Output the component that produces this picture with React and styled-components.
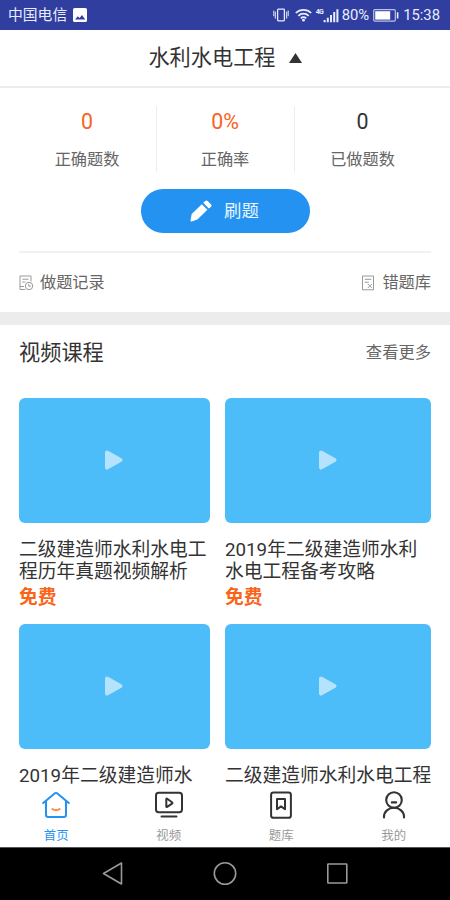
import React from 'react';
import styled, { createGlobalStyle } from 'styled-components';

const Global = createGlobalStyle`
  *, *::before, *::after { box-sizing: border-box; }
  body {
    margin: 0;
    background: #fff;
    font-family: Roboto, "Noto Sans CJK SC", sans-serif;
    color: #333;
  }
`;

const Screen = styled.div`
  width: 450px;
  height: 900px;
  display: flex;
  flex-direction: column;
  overflow: hidden;
  background: #fff;
`;

const StatusBar = styled.header`
  height: 30px;
  flex: none;
  display: flex;
  align-items: center;
  justify-content: space-between;
  padding: 0 10px 0 8px;
  background: #303f9f;
  color: #e9ecff;
  font-size: 14.8px;
  line-height: 20px;
`;

const StatusGroup = styled.div`
  display: flex;
  align-items: center;
  gap: ${p => p.$gap}px;
  white-space: nowrap;
  svg { display: block; flex: none; }
`;

const Signal = styled.span`
  display: flex;
  align-items: flex-start;
`;

const NetworkType = styled.span`
  width: 8px;
  margin-right: -1px;
  font-size: 7px;
  font-weight: 700;
  line-height: 9px;
  letter-spacing: -0.6px;
`;

const TitleBar = styled.div`
  height: 57.5px;
  flex: none;
  display: flex;
  align-items: center;
  justify-content: center;
  gap: 13px;
  padding-top: 1px;
  border-bottom: 2.5px solid #ececec;
  font-size: 21.2px;
  line-height: 30px;
  svg { display: block; margin: -1px 0 0 0; }
`;

const Stats = styled.section`
  flex: none;
  height: 64px;
  margin: 18.5px 19.5px 0 18.5px;
  display: grid;
  grid-template-columns: 137px 138px 137px;
`;

const Stat = styled.div`
  display: flex;
  flex-direction: column;
  align-items: center;
  border-left: ${p => (p.$divided ? '1.5px solid #ededed' : '0')};
`;

const StatValue = styled.div`
  margin-top: 1px;
  font-size: 21.4px;
  line-height: 30px;
  color: ${p => (p.$accent ? '#f9621f' : '#333')};
`;

const StatLabel = styled.div`
  margin-top: 10.5px;
  font-size: 16.2px;
  line-height: 24px;
  color: #666;
`;

const PracticeButton = styled.button`
  flex: none;
  align-self: center;
  width: 169px;
  height: 44px;
  margin-top: 18.5px;
  padding: 0 1px 0 0;
  border: 0;
  border-radius: 22px;
  display: flex;
  align-items: center;
  justify-content: center;
  gap: 12px;
  background: #2492f0;
  color: #eaf6ff;
  font: inherit;
  font-size: 17.4px;
  line-height: 24px;
  svg { display: block; }
`;

const Links = styled.div`
  flex: none;
  height: 61px;
  margin: 18px 19px 0;
  padding-top: 2.5px;
  border-top: 2px solid #f1f1f1;
  display: flex;
  align-items: center;
  justify-content: space-between;
`;

const QuickLink = styled.div`
  display: flex;
  align-items: center;
  gap: 6px;
  font-size: 16.2px;
  line-height: 24px;
  color: #666;
  svg { display: block; margin-top: -1px; }
`;

const Divider = styled.div`
  flex: none;
  height: 13px;
  background: #ececec;
`;

const Courses = styled.main`
  flex: 1;
  min-height: 0;
  overflow: hidden;
  padding: 0 19px;
`;

const SectionHead = styled.div`
  height: 54px;
  padding-top: 2.5px;
  display: flex;
  align-items: center;
  justify-content: space-between;
`;

const SectionTitle = styled.h2`
  margin: 0;
  font-size: 21.2px;
  font-weight: 400;
  line-height: 30px;
`;

const More = styled.span`
  font-size: 16.3px;
  line-height: 24px;
  color: #666;
`;

const CourseGrid = styled.div`
  margin-top: 19px;
  display: grid;
  grid-template-columns: 190.5px 206px;
  column-gap: 15.5px;
  row-gap: 15px;
`;

const Thumb = styled.div`
  height: 125px;
  border-radius: 6px;
  display: flex;
  align-items: center;
  justify-content: center;
  background: #4dbdf9;
`;

const CourseTitle = styled.h3`
  margin: 16px -6px 0 0;
  font-size: 18.75px;
  font-weight: 400;
  line-height: 22px;
  white-space: nowrap;
`;

const Price = styled.div`
  margin-top: 4px;
  font-size: 18.75px;
  font-weight: 700;
  line-height: 22px;
  color: #fa6318;
`;

const TabBar = styled.nav`
  flex: none;
  height: 59.5px;
  display: grid;
  grid-template-columns: repeat(4, 1fr);
  background: #fff;
`;

const Tab = styled.div`
  display: flex;
  flex-direction: column;
  align-items: center;
  color: ${p => (p.$active ? '#2492f0' : '#999')};
  font-size: 12.4px;
  line-height: 18px;
  svg { display: block; margin-bottom: 7px; }
`;

const SystemNav = styled.footer`
  flex: none;
  height: 53px;
  display: flex;
  align-items: center;
  justify-content: center;
  gap: 88px;
  background: #000;
  border-top: 1px solid #555;
`;

const ImageIcon = () => (
  <svg width="14" height="14" viewBox="0 0 14 14">
    <rect width="14" height="14" rx="1.6" fill="#fff" />
    <path d="M2 11.5 4.8 8.2 6.6 10 9 7 12.2 11.5Z" fill="#303f9f" />
  </svg>
);

const VibrateIcon = () => (
  <svg width="16" height="14" viewBox="0 0 16 14" fill="none" stroke="#e9ecff" strokeWidth="1.3">
    <rect x="4.6" y="1.2" width="6.8" height="11.6" rx=".8" />
    <path d="M2.3 3.6v7M13.7 3.6v7M.8 2.6v5.6M15.2 2.6v5.6" strokeWidth="1" />
  </svg>
);

const WifiIcon = () => (
  <svg width="17" height="14" viewBox="0 0 17 14" fill="none" stroke="#e9ecff" strokeWidth="1.7">
    <path d="M.8 5a11 11 0 0 1 15.4 0M3.3 7.8a7.4 7.4 0 0 1 10.4 0M5.8 10.3a3.9 3.9 0 0 1 5.4 0" />
    <circle cx="8.5" cy="12.2" r="1.4" fill="#e9ecff" stroke="none" />
  </svg>
);

const SignalIcon = () => (
  <svg width="16" height="15" viewBox="7 0 16 15" fill="#e9ecff">
    <path d="M7.6 12h2v2.3h-2zM10.8 9.7h2v4.6h-2zM14 7h2v7.3h-2zM17.2 4h2v10.3h-2zM20.4 1.3h2v13h-2z" />
  </svg>
);

const BatteryIcon = () => (
  <svg width="26" height="13" viewBox="0 0 26 13">
    <rect x=".7" y=".7" width="21.6" height="11.4" rx="1" fill="none" stroke="#b9c0ec" strokeWidth="1.2" />
    <path d="M2.2 2.2h15v8.4h-15z" fill="#fff" />
    <path d="M24.6 3.3v6.2" stroke="#e9ecff" strokeWidth="1.6" />
  </svg>
);

const PencilIcon = () => (
  <svg width="22" height="22" viewBox="0 0 22 22" fill="#fff">
    <path d="M11.8 4.2 17.4 9.8 7.4 19.6 1.8 21.4Q.2 21.8.5 20.2L1.7 14ZM13.2 2.8 15.2.9Q16.4-.1 17.7 1.1L20.9 4.3Q22.2 5.6 20.9 6.9L18.8 8.5Z" />
  </svg>
);

const RecordIcon = () => (
  <svg width="15" height="16" viewBox="0 0 15 16" fill="none" stroke="#999" strokeWidth="1">
    <path d="M12 6.5V1H1v13.5h5.2M3.3 4.2h6.2M3.3 7h3M1 11.5h4" />
    <circle cx="10" cy="11" r="3.7" />
    <path d="M9.8 8.8v2.4h2" />
  </svg>
);

const WrongIcon = () => (
  <svg width="15" height="16" viewBox="0 0 15 16" fill="none" stroke="#999" strokeWidth="1">
    <path d="M1.5 1h11v13.8h-11ZM3.8 4.3h6.5M3.8 7.3h4M6.8 9l4 4M10.8 9l-4 4" />
  </svg>
);

const PlayIcon = () => (
  <svg width="20" height="20" viewBox="0 0 20 20">
    <path d="M3 2.4 16.4 10 3 17.6Z" fill="#b5e2fd" stroke="#b5e2fd" strokeWidth="4" strokeLinejoin="round" />
  </svg>
);

const HomeIcon = () => (
  <svg width="30" height="32" viewBox="0 0 30 32" fill="none" stroke="#2492f0" strokeWidth="2" strokeLinecap="round" strokeLinejoin="round">
    <path d="M2.2 15 13.6 5.4Q15 4.4 16.4 5.4L27.8 15M5 13.4v13.3Q5 28.9 7.2 28.9H22.8Q25 28.9 25 26.7V13.4" />
    <path d="M11.4 21q3.6 2.4 7.2 0" stroke="#ff8a4a" />
  </svg>
);

const VideoIcon = () => (
  <svg width="30" height="32" viewBox="0 0 30 32" fill="none" stroke="#333" strokeWidth="2" strokeLinecap="round" strokeLinejoin="round">
    <rect x="2" y="4.8" width="26" height="19.4" rx="2.6" />
    <path d="M12.3 11.2v7.2q0 .9.9.4L18 15.6q.9-.7 0-1.4l-4.8-3.4q-.9-.5-.9.4ZM7.5 28.6h15" />
  </svg>
);

const BankIcon = () => (
  <svg width="30" height="32" viewBox="0 0 30 32" fill="none" stroke="#333" strokeWidth="2" strokeLinecap="round" strokeLinejoin="round">
    <rect x="5.1" y="4.4" width="19.8" height="25.4" rx="2.4" />
    <path d="M11 10.9h8v10.3l-4-2.8-4 2.8Z" />
  </svg>
);

const ProfileIcon = () => (
  <svg width="30" height="32" viewBox="0 0 30 32" fill="none" stroke="#333" strokeWidth="2.1" strokeLinecap="round">
    <circle cx="15" cy="12" r="7.8" />
    <path d="M12.8 14.4h4.4M5 29.5v-1a10 8.7 0 0 1 20 0v1" />
  </svg>
);

const courses = [
  { lines: ['二级建造师水利水电工', '程历年真题视频解析'], price: '免费' },
  { lines: ['2019年二级建造师水利', '水电工程备考攻略'], price: '免费' },
  { lines: ['2019年二级建造师水'] },
  { lines: ['二级建造师水利水电工程'] },
];

const tabs = [
  { label: '首页', Icon: HomeIcon, active: true },
  { label: '视频', Icon: VideoIcon },
  { label: '题库', Icon: BankIcon },
  { label: '我的', Icon: ProfileIcon },
];

export default function App() {
  return (
    <Screen>
      <Global />
      <StatusBar>
        <StatusGroup $gap={6}><span>中国电信</span><ImageIcon /></StatusGroup>
        <StatusGroup $gap={4}>
          <StatusGroup $gap={6}><VibrateIcon /><WifiIcon /></StatusGroup>
          <StatusGroup $gap={3}>
            <Signal><NetworkType>4G</NetworkType><SignalIcon /></Signal>
            <span>80%</span>
          </StatusGroup>
          <BatteryIcon />
          <span>15:38</span>
        </StatusGroup>
      </StatusBar>
      <TitleBar>
        <span>水利水电工程</span>
        <svg width="13" height="10" viewBox="0 0 13 10"><path d="M0 10 6.5 0 13 10Z" fill="#333" /></svg>
      </TitleBar>
      <Stats>
        <Stat><StatValue $accent>0</StatValue><StatLabel>正确题数</StatLabel></Stat>
        <Stat $divided><StatValue $accent>0%</StatValue><StatLabel>正确率</StatLabel></Stat>
        <Stat $divided><StatValue>0</StatValue><StatLabel>已做题数</StatLabel></Stat>
      </Stats>
      <PracticeButton><PencilIcon /><span>刷题</span></PracticeButton>
      <Links>
        <QuickLink><RecordIcon /><span>做题记录</span></QuickLink>
        <QuickLink><WrongIcon /><span>错题库</span></QuickLink>
      </Links>
      <Divider />
      <Courses>
        <SectionHead><SectionTitle>视频课程</SectionTitle><More>查看更多</More></SectionHead>
        <CourseGrid>
          {courses.map((c, i) => (
            <article key={i}>
              <Thumb><PlayIcon /></Thumb>
              <CourseTitle>{c.lines.map(l => <div key={l}>{l}</div>)}</CourseTitle>
              {c.price && <Price>{c.price}</Price>}
            </article>
          ))}
        </CourseGrid>
      </Courses>
      <TabBar>
        {tabs.map(({ label, Icon, active }) => (
          <Tab key={label} $active={active}><Icon /><span>{label}</span></Tab>
        ))}
      </TabBar>
      <SystemNav>
        <svg width="24" height="24" viewBox="0 0 24 24" fill="none" stroke="#999" strokeWidth="1.6" strokeLinejoin="round"><path d="M20.5 1v21L2.5 11.5Z" /></svg>
        <svg width="24" height="24" viewBox="0 0 24 24" fill="none" stroke="#999" strokeWidth="1.6"><circle cx="12" cy="11.5" r="10.7" /></svg>
        <svg width="24" height="24" viewBox="0 0 24 24" fill="none" stroke="#999" strokeWidth="1.6"><rect x="2.8" y="2" width="19" height="19" rx=".5" /></svg>
      </SystemNav>
    </Screen>
  );
}
